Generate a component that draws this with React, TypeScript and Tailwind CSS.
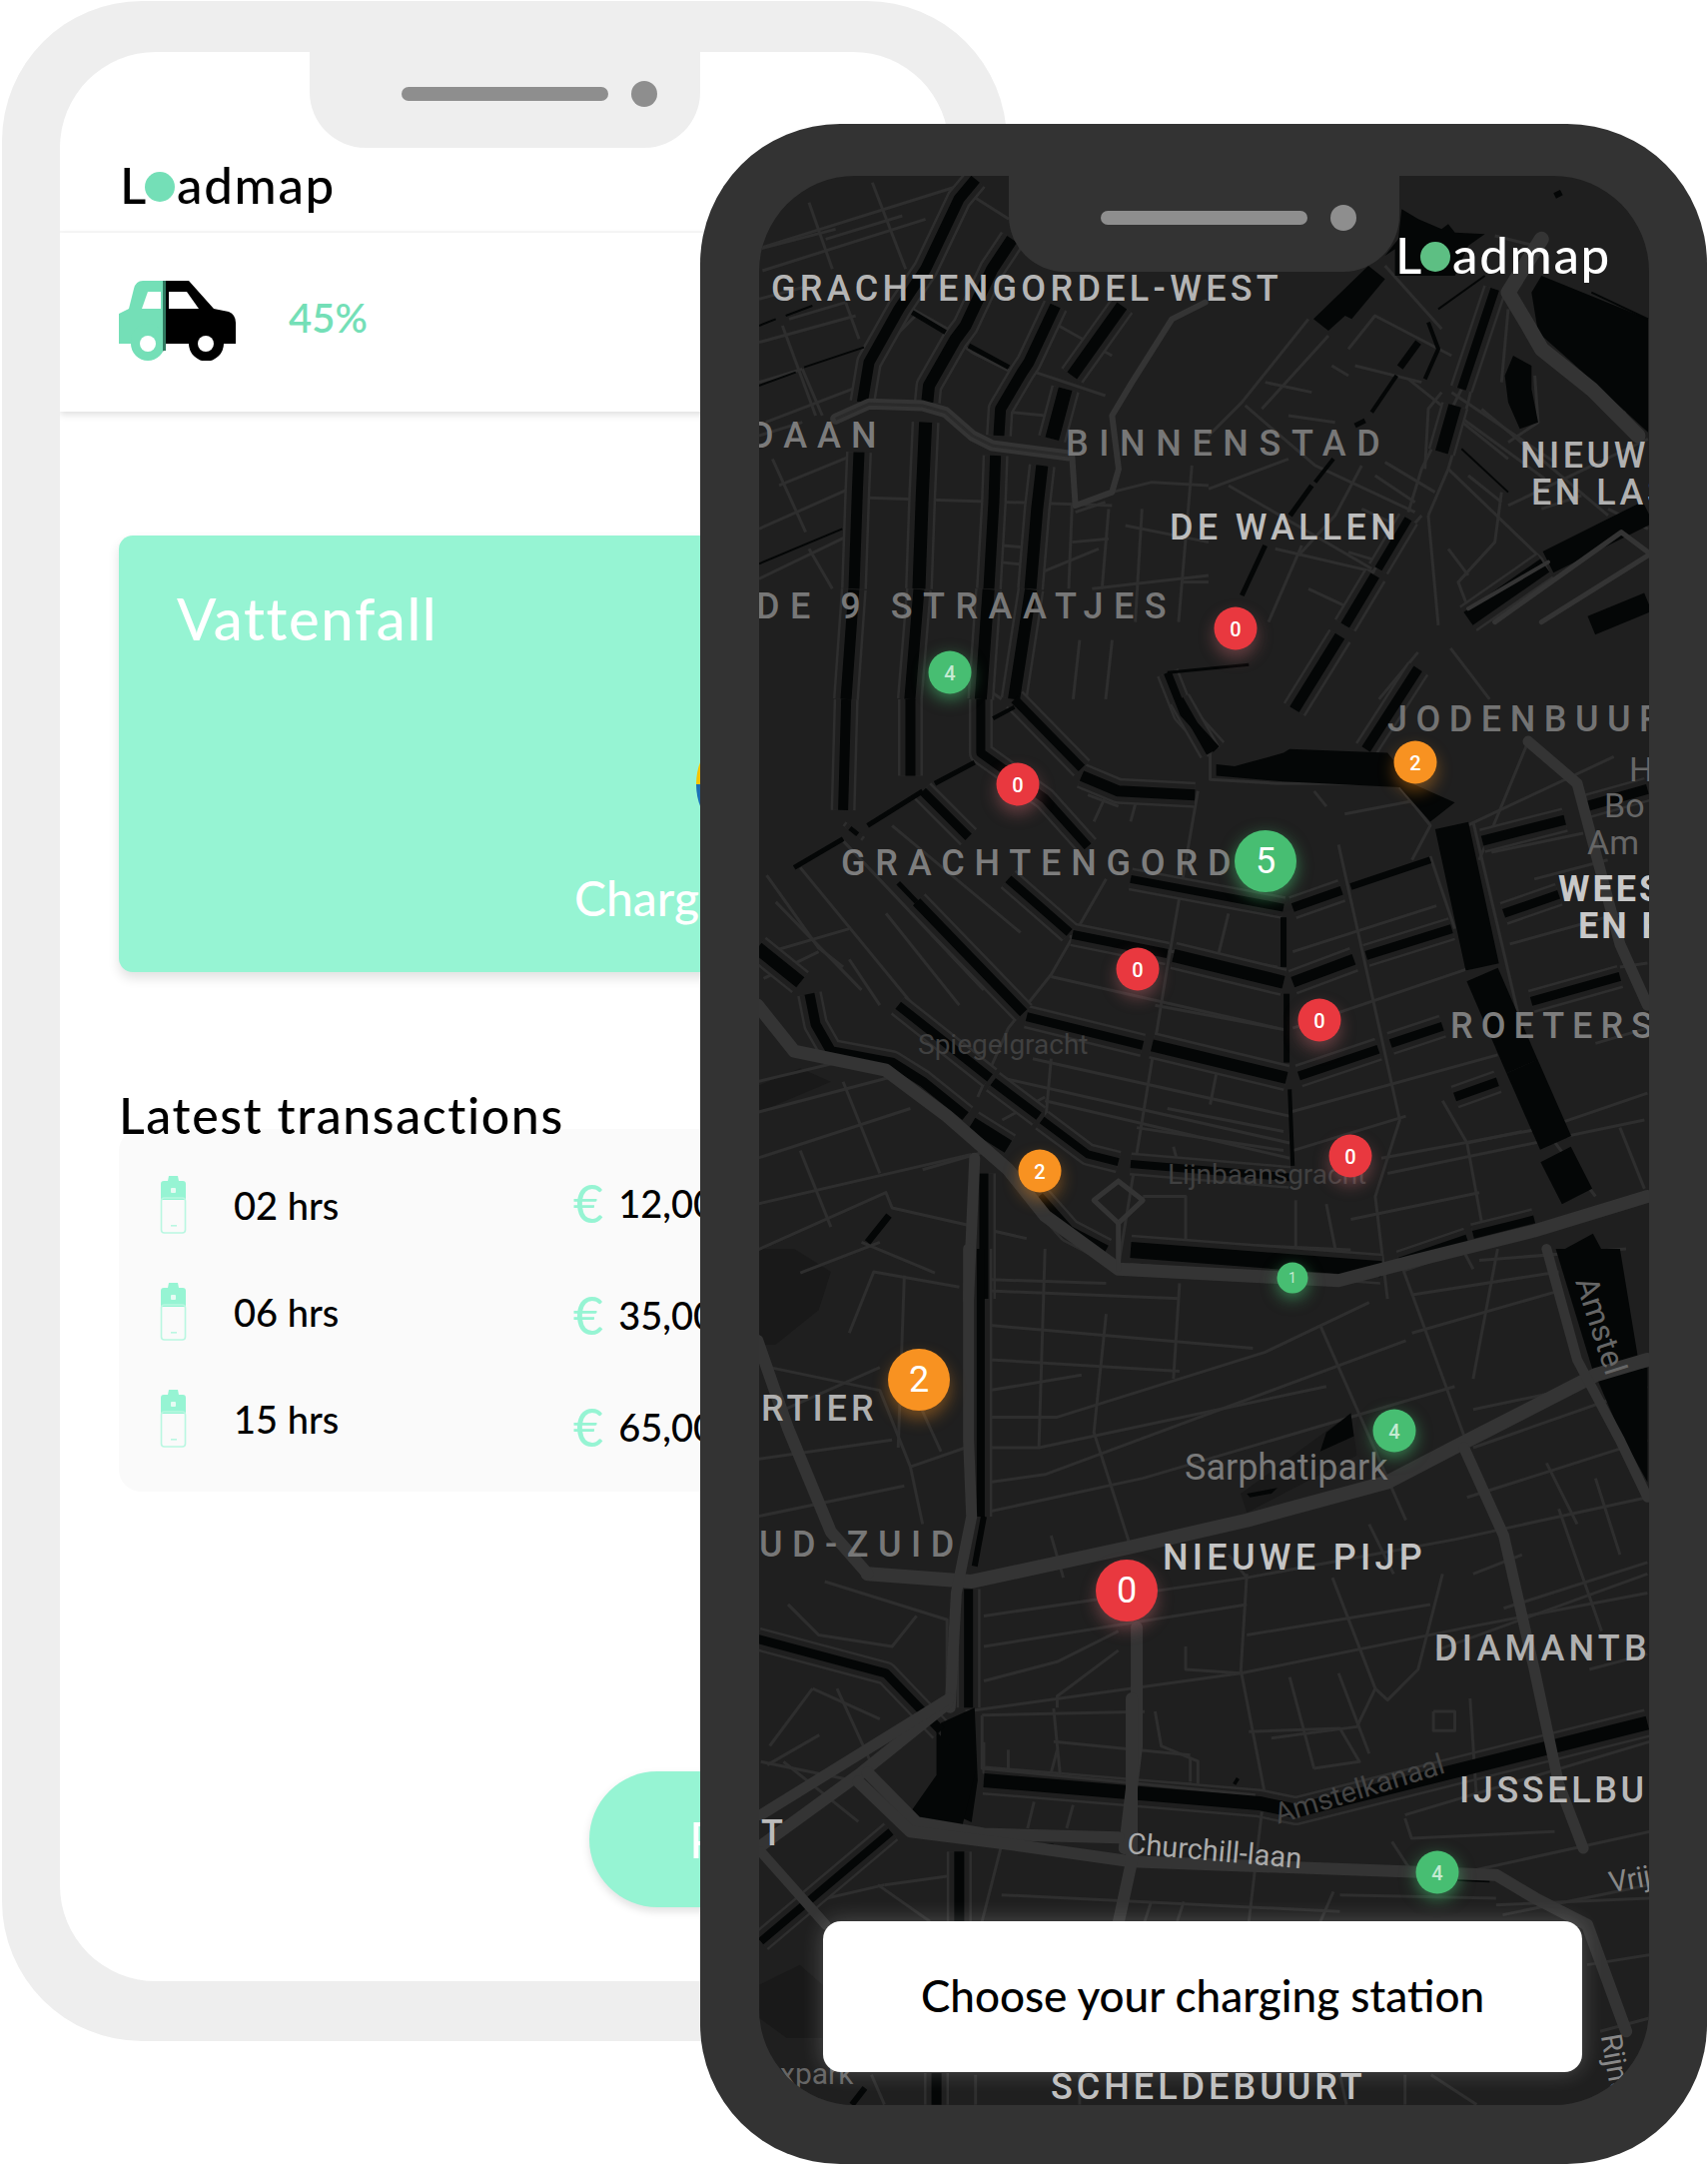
import React from "react";

type Stroke = [string, number];
type Group = {
  t: string;
  minor?: string[];
  canals?: Stroke[];
  roads?: Stroke[];
  black?: string[];
  dark?: string[];
};

const groups: Group[] = [
  {
    t: "translate(760 176) scale(0.3333 0.3333)",
    minor: [
      "10,215 600,30", "10,285 500,130", "0,220 230,160", "150,80 220,280", "340,20 440,280", "200,190 430,120",
      "70,450 170,720", "260,380 300,490", "130,580 190,720", "20,740 280,640", "0,500 290,420", "40,850 140,1070",
      "150,1120 220,1240", "60,930 280,840", "0,1060 270,940", "280,965 1060,990", "640,60 750,130", "350,540 470,420",
      "900,450 1060,540", "830,590 1040,660", "760,710 860,720", "730,1110 840,1120", "720,1160 820,1170",
      "950,1010 1040,980", "940,1100 1050,1090", "1050,1000 1030,1240", "850,1190 1020,1120", "1300,870 1260,1340",
      "1060,950 1180,920 1350,930", "940,990 930,1240", "1270,1220 1350,1220", "0,780 130,740", "0,1210 270,1080",
      "560,470 640,530 800,610", "460,400 620,490", "0,370 150,330", "90,430 260,380", "0,620 130,580", "1100,1050 1350,1100",
      "1150,1000 1130,1340", "1000,1240 1350,1200",
    ],
    canals: [
      ["650,10 600,70 500,280 420,400 330,560 310,680", 11],
      ["300,830 295,950 285,1240", 11],
      ["760,190 700,280 620,450 590,490 510,630 505,680", 12],
      ["500,740 490,960 480,1240", 13],
      ["890,390 810,560 790,590 725,700 720,780", 11],
      ["710,840 705,980 690,1240", 11],
      ["1090,390 940,600", 12],
      ["920,640 880,790", 14],
      ["850,870 835,1000 815,1240", 12],
      ["460,410 560,470", 5],
      ["630,510 750,575", 5],
      ["0,450 50,430", 2],
      ["80,420 160,390", 2],
      ["0,630 110,590", 2],
      ["135,575 315,515", 2],
      ["0,1165 250,1060", 2],
    ],
    roads: [
      ["230,730 330,685 490,690 560,710 640,780 700,810 930,840", 11],
      ["940,840 950,990 1060,950 1080,880 1060,720 1120,620 1240,430 1340,380", 6],
    ],
  },
  {
    t: "translate(1210 176) scale(0.3333 0.3333)",
    minor: [
      "300,430 100,680 0,780", "360,480 160,700", "110,690 320,870 620,1010", "530,270 700,460", "420,520 500,420 730,540",
      "440,570 640,620", "730,650 1040,860", "750,720 1010,910", "600,610 900,850", "760,640 640,880 600,1010",
      "700,650 660,700 650,880", "460,870 380,1020 270,1140", "280,1110 180,1340", "720,880 1000,1150 1020,1190",
      "60,930 490,1180", "200,1120 500,1190", "640,1020 500,1180 400,1340", "660,1020 690,1350",
      "880,950 860,1100 750,1220 780,1300 1000,1150", "900,990 1320,790", "980,600 990,740 900,800", "820,700 1200,1020",
      "860,340 780,680 720,880 660,1020", "900,400 880,620", "170,620 310,650", "240,720 380,740", "370,570 420,600",
      "0,940 240,850", "1150,550 1110,600", "1220,610 1180,660", "1290,670 1250,710", "860,180 980,210",
      "530,860 680,950", "500,900 620,980", "460,1000 590,1060", "720,1120 780,1200", "420,1130 520,1160", "300,1240 470,1320",
      "780,900 880,980", "1200,1000 1320,1060", "1000,1000 1120,960",
    ],
    canals: [
      ["860,340 760,640", 9],
      ["740,690 700,830", 13],
      ["760,820 900,950", 2],
      ["630,500 575,575", 7],
      ["565,600 490,710", 4],
      ["470,735 440,750", 5],
      ["375,850 320,920", 4],
      ["310,930 245,1020", 5],
      ["170,1110 100,1260", 5],
      ["600,1030 510,1180", 8],
      ["500,1200 410,1350", 10],
      ["1320,1010 1020,1160", 24],
      ["1010,1170 780,1330", 16],
      ["1320,1280 1150,1350", 20],
      ["830,300 690,400", 2],
      ["660,440 690,520 650,610", 4],
      ["1150,350 1320,430", 2],
      ["1040,60 1060,50", 6],
    ],
    black: [
      "480,270 530,310 430,430 410,420 360,465 315,430",
      "580,100 630,130 700,160 720,145 740,170 830,175 780,210 740,300 560,300 560,220 530,240 570,190",
      "915,540 970,570 970,640 990,740 935,760 900,680 890,600",
      "1000,300 1320,430 1320,770 1080,550 990,470 970,350",
    ],
    roads: [
      ["1000,190 900,350 960,450 1000,520 1150,640 1290,780", 15],
      ["860,1340 1240,1070 1320,1130", 5],
      ["1000,1340 1320,1140", 5],
      ["780,1300 1020,1160", 4],
    ],
  },
  {
    t: "translate(690 110) scale(0.6515 0.4082)",
    minor: ["240,1310 240,1445", "440,1400 480,1445", "730,1390 750,1445", "1120,1330 1060,1445", "1170,1320 1230,1445", "600,1300 590,1445", "650,1300 640,1445"],
    canals: [
      ["253,1176 241,1445", 11],
      ["353,1176 339,1445", 11],
      ["460,1176 448,1445", 12],
      ["525,1176 499,1445", 12],
      ["735,1380 860,1360", 3],
      ["735,1380 760,1480 810,1568", 8],
      ["1000,1290 930,1470", 11],
      ["1120,1370 1040,1568", 10],
    ],
  },
  {
    t: "translate(740 700) scale(0.6124 0.3827)",
    minor: [
      "750,240 700,700 620,1480", "600,470 510,720 440,860 390,1040", "510,725 880,860", "540,620 880,700", "680,800 895,865",
      "480,940 900,1090", "430,990 900,1160", "500,1050 900,1200", "900,1080 1240,930", "905,860 1200,700", "905,1180 1090,1090",
      "905,660 1140,540", "980,380 1080,1100 1040,1300 1060,1568", "30,1080 290,970", "170,1000 230,1240", "30,1200 280,1070",
      "30,1320 380,1190", "30,1440 240,1290 250,1330 470,1410", "100,1180 150,1380", "45,460 130,650 170,700",
      "100,440 300,830", "170,370 400,760", "250,330 460,610", "130,660 40,730", "180,600 30,670", "1290,110 1210,420",
      "1200,320 1320,1140", "1050,1200 1320,1120 1485,1030", "1150,1050 1190,1160 1280,1130", "1060,1240 1480,1100",
      "1190,1160 1220,1420", "1320,1130 1400,1300", "1400,900 1485,860", "1230,400 1380,350", "1260,640 1440,560",
      "660,1300 730,1300 730,1420 1000,1440", "780,980 770,1060", "710,1170 720,1230", "910,1310 910,1480",
      "960,1320 980,1480", "1170,1400 1200,1490", "180,680 230,800", "570,250 620,280", "940,240 960,280",
      "1080,230 1130,330 1100,420", "770,140 770,210 880,220 1060,220", "430,1100 500,1040", "510,940 500,1120",
      "1190,330 1430,150", "1440,700 1485,690", "600,250 580,320", "650,260 640,320", "240,560 360,800", "60,530 200,760",
      "700,1070 890,1130", "650,1120 890,1180", "30,1000 160,950", "300,1230 430,1170", "200,1420 320,1500", "100,1500 230,1420",
      "1130,410 1170,600", "990,300 1120,260", "1000,1360 1210,1290", "800,560 780,690", "1300,470 1420,420", "1440,1120 1480,1280",
    ],
    canals: [
      ["175,0 170,290", 10],
      ["185,350 190,340", 10],
      ["290,530 465,820", 10],
      ["30,650 100,740", 13],
      ["115,770 125,850 150,920 250,950 300,1000 370,1090", 10],
      ["380,1110 440,1170", 14],
      ["260,800 410,990", 9],
      ["415,1000 490,1090", 9],
      ["495,1100 570,1190 620,1210", 8],
      ["640,1215 900,1250", 8],
      ["490,1300 540,1390 600,1440", 10],
      ["640,1440 1050,1490", 16],
      ["1080,1470 1190,1410", 8],
      ["1200,1400 1300,1360", 8],
      ["280,0 280,200", 10],
      ["300,240 375,360", 9],
      ["440,470 540,610", 9],
      ["545,615 700,665", 9],
      ["710,670 890,740", 13],
      ["905,740 1005,680", 11],
      ["1025,670 1165,600", 9],
      ["395,0 395,140 500,260 570,385", 9],
      ["560,200 620,240 745,250", 11],
      ["450,0 560,180", 9],
      ["720,0 770,140", 8],
      ["470,830 660,905", 9],
      ["675,905 895,990", 12],
      ["915,985 1045,915", 9],
      ["1065,900 1150,855", 9],
      ["640,470 890,545", 8],
      ["905,545 985,500", 9],
      ["1000,490 1130,420", 7],
      ["890,570 890,700", 6],
      ["895,770 895,950", 6],
      ["900,1020 905,1220", 4],
      ["90,440 170,365", 5],
      ["210,330 300,240", 5],
      ["320,220 385,165", 5],
      ["415,50 450,20", 4],
      ["260,480 290,530", 5],
      ["1165,330 1215,700", 34],
      ["1215,720 1280,960", 34],
      ["1280,960 1335,1160", 34],
      ["1335,1190 1370,1300", 34],
      ["1370,1420 1420,1568", 36],
      ["1215,370 1350,315", 10],
      ["1250,560 1340,510", 9],
      ["1295,790 1440,725", 9],
      ["1170,1040 1240,1000", 9],
      ["1385,280 1485,235", 10],
      ["210,1420 245,1350", 7],
      ["400,1240 400,1568", 9],
    ],
    black: ["780,170 810,175 890,140 900,130 1060,140 1100,220 1170,270 1130,320 1080,230 890,215 780,200"],
    dark: ["32,1010 100,965 150,1000 32,1080"],
    roads: [
      ["30,800 90,920 240,970 340,1090 440,1230 500,1350 620,1490 980,1520 1100,1470 1300,1390 1485,1300", 13],
      ["385,1200 375,1568", 11],
      ["1290,110 1370,220 1440,640 1485,800", 11],
      ["620,1260 580,1310 620,1370 660,1310 620,1260", 5],
      ["620,1370 620,1490", 5],
    ],
  },
  {
    t: "translate(740 1250) scale(0.6124 0.3827)",
    minor: [
      "410,110 720,130", "410,200 840,260", "410,290 720,320", "410,440 520,440 860,270 1030,140", "410,520 490,520 960,360",
      "410,610 500,590 1090,240", "400,690 660,600 1170,360", "500,0 490,520", "600,170 580,480 640,780", "720,90 710,340",
      "950,200 1090,710", "1080,30 1190,510", "400,960 830,860 1170,760 1485,650", "400,1040 830,930", "400,1130 520,1080 620,1000",
      "520,1200 520,1170 620,1050", "370,1210 820,1110 1190,990 1485,900", "400,1290 400,1370 740,1400", "730,1040 730,1100 820,1110 830,850",
      "820,1100 860,1430", "970,860 1040,1150 1060,1180 1110,1100 1150,850", "870,1280 1010,1250 1040,1150", "1190,650 1485,500",
      "1140,1050 1485,850", "1340,680 1410,1000", "30,700 270,620", "30,550 250,500", "60,430 230,310", "180,220 220,60 360,100",
      "260,520 270,70", "330,530 290,390", "50,310 230,370 280,570 370,520", "280,570 300,720", "140,870 340,970 340,1180",
      "80,930 130,1010 250,1040 290,960", "120,1150 230,1230", "120,1150 50,1300", "220,1360 160,1150", "510,750 530,860",
      "1200,520 1485,360", "1320,560 1370,720", "1400,600 1440,800", "1390,1100 1485,1060", "900,1120 940,1360", "980,1110 1030,1320",
      "1135,1210 1170,1210 1170,1260 1135,1260 1135,1210", "1240,0 1200,340", "440,1310 440,1360", "520,1310 510,1370", "680,1210 690,1300 750,1340 750,1400",
      "1210,30 1450,0", "1100,120 1340,60", "1100,220 1340,110", "1200,420 1320,380", "400,80 600,90", "830,1010 1130,930",
      "1200,850 1280,800", "1250,940 1485,820", "800,800 830,860", "1030,720 1070,850", "410,370 560,330",
    ],
    canals: [
      ["395,0 395,700", 8],
      ["400,700 385,830", 6],
      ["375,890 375,1200", 9],
      ["30,1020 240,1110 330,1260", 9],
      ["400,1390 850,1450 910,1470 1485,1240", 14],
      ["810,1390 815,1395", 7],
    ],
    black: [
      "330,1240 385,1200 390,1390 380,1500 300,1440 330,1370",
      "1335,0 1440,0 1470,290 1395,315",
      "1400,330 1485,310 1485,610 1440,480",
      "960,480 1000,430 1005,490 950,530",
      "830,640 880,625 870,640 835,650",
    ],
    dark: ["820,640 1000,430 1010,540 830,690", "32,0 90,0 150,60 130,160 60,250 32,250"],
    roads: [
      ["210,850 380,870 640,780 830,710 1060,610 1180,510 1400,330 1485,290", 14],
      ["375,0 375,500 380,700 355,900 345,1200", 11],
      ["650,990 650,1300 630,1568", 12],
      ["1185,520 1250,750 1300,1100 1340,1400 1380,1568", 11],
      ["1320,0 1370,290 1440,500 1485,650", 10],
      ["30,240 80,470 150,740 210,850", 12],
      ["340,1190 200,1370 30,1568", 12],
      ["210,1370 290,1500 400,1530 620,1540", 12],
    ],
  },
  {
    t: "translate(690 1700) scale(0.6515 0.3333)",
    minor: [
      "480,440 450,670", "530,310 520,390", "590,320 580,390", "450,50 450,210 870,290", "560,30 570,230", "770,180 770,250",
      "880,340 860,670", "990,580 970,670", "1100,360 1110,420 1330,400", "1100,350 1476,130", "1150,540 1476,400", "1250,650 1476,560",
      "1380,800 1476,770", "120,200 200,110", "145,190 260,370", "110,190 260,250", "300,560 410,530", "190,610 300,560", "290,560 370,670",
      "480,590 1000,640", "710,610 700,670", "760,610 750,670", "1000,590 1240,600", "1240,620 1476,600", "1400,1000 1476,960",
      "450,50 700,40", "860,100 1000,90 1030,190 960,210", "1200,0 1210,300", "1080,430 1110,520", "560,130 770,170",
      "1140,1130 1210,1220", "1000,1130 1010,1220", "1100,1130 1100,1220", "440,1130 440,1220", "600,1130 600,1220", "280,1130 300,1220",
    ],
    canals: [
      ["415,460 415,670", 10],
      ["110,730 310,400", 8],
      ["380,1125 380,1220", 10],
      ["250,1220 270,1170", 6],
      ["470,430 560,440", 2],
      ["1180,545 1230,550", 2],
    ],
    black: ["380,100 440,220 420,380 330,370 380,230"],
    dark: ["108,860 170,800 205,860 205,1020 150,1020 108,960"],
    roads: [
      ["400,0 110,350", 11],
      ["260,250 340,400 500,440 680,490 1100,520 1240,530 1300,600 1380,680 1440,1000", 12],
      ["110,460 210,680", 10],
      ["680,0 680,490 660,670", 12],
    ],
  },
];

function MapDrawing() {
  const ve = { vectorEffect: "non-scaling-stroke" as const };
  return (
    <svg viewBox="760 176 891 1931" className="absolute inset-0 h-full w-full" fill="none" strokeLinejoin="round" strokeLinecap="butt">
      {groups.map((g, i) => (
        <g key={"d" + i} transform={g.t}>
          {(g.dark ?? []).map((p, j) => (
            <polygon key={j} points={p} fill="#191919" />
          ))}
        </g>
      ))}
      {groups.map((g, i) => (
        <g key={"m" + i} transform={g.t}>
          {(g.minor ?? []).map((p, j) => (
            <polyline key={j} points={p} stroke="#2e2e2e" strokeWidth={3} {...ve} />
          ))}
          {(g.canals ?? []).filter((c) => c[1] > 7 && c[1] < 20).map((c, j) => (
            <polyline key={j} points={c[0]} stroke="#2e2e2e" strokeWidth={c[1] + 15} {...ve} />
          ))}
          {(g.canals ?? []).filter((c) => c[1] > 7 && c[1] < 20).map((c, j) => (
            <polyline key={j} points={c[0]} stroke="#1f1f1f" strokeWidth={c[1] + 10} {...ve} />
          ))}
        </g>
      ))}
      {groups.map((g, i) => (
        <g key={"c" + i} transform={g.t}>
          {(g.black ?? []).map((p, j) => (
            <polygon key={j} points={p} fill="#040606" />
          ))}
          {(g.canals ?? []).map((c, j) => (
            <polyline key={j} points={c[0]} stroke="#040606" strokeWidth={c[1]} {...ve} />
          ))}
        </g>
      ))}
      {groups.map((g, i) => (
        <g key={"r" + i} transform={g.t}>
          {(g.roads ?? []).map((c, j) => (
            <polyline key={j} points={c[0]} stroke="#343434" strokeWidth={c[1]} strokeLinecap="round" {...ve} />
          ))}
        </g>
      ))}
      <polyline transform="translate(760 176) scale(0.3333)" points="230,730 330,685 490,690 560,710 640,780 700,810 930,840" stroke="#2a2a2a" strokeWidth={3} vectorEffect="non-scaling-stroke" />
    </svg>
  );
}

function Logo({ dark }: { dark?: boolean }) {
  return (
    <span className={"font-['Lato',sans-serif] text-[51px] font-medium leading-none tracking-[1.7px] " + (dark ? "text-white" : "text-black")}>
      L
      <span className="relative text-transparent">
        o
        <span className={"absolute left-[-1px] top-[18px] h-[30px] w-[30px] rounded-full " + (dark ? "bg-[#5dbf83]" : "bg-[#74dfb7]")} />
      </span>
      admap
    </span>
  );
}

function Notch({ className }: { className: string }) {
  return (
    <div className={"absolute z-20 flex h-[96px] w-[391px] items-center gap-[23px] rounded-b-[56px] pb-[12px] pl-[92px] " + className}>
      <div className="h-[14px] w-[207px] rounded-full bg-[#8e8e8e]" />
      <div className="h-[26px] w-[26px] rounded-full bg-[#8e8e8e]" />
    </div>
  );
}

function Car() {
  const body =
    "M20 0H70L95 28L110 31Q117 34 117 42V63H105A17 17 0 0 1 70 63H46A17 17 0 0 1 12 63H0V33L10 28L15 8Q17 0 24 0Z";
  return (
    <svg viewBox="0 0 117 80" className="h-[80px] w-[117px]">
      <defs>
        <clipPath id="carL">
          <rect x="0" y="0" width="44" height="80" />
        </clipPath>
        <clipPath id="carR">
          <rect x="44" y="0" width="73" height="80" />
        </clipPath>
      </defs>
      <path d={body} fill="#74dfb7" clipPath="url(#carL)" />
      <path d={body} fill="#000" clipPath="url(#carR)" />
      <circle cx="29" cy="60" r="17" fill="#74dfb7" clipPath="url(#carL)" />
      <rect x="44" y="0" width="3" height="70" fill="#2f7a60" />
      <circle cx="87" cy="60" r="17" fill="#000" />
      <circle cx="29" cy="63" r="8" fill="#fff" />
      <circle cx="87" cy="63" r="8" fill="#fff" />
      <path d="M23 28L29 11H42V28Z" fill="#fff" />
      <path d="M50 11H68L80 28H50Z" fill="#fff" />
    </svg>
  );
}

function Battery() {
  return (
    <svg viewBox="0 0 27 58" className="h-[58px] w-[27px]">
      <path d="M9 0h9l1 5h4q3 0 3 3v16H1V8q0-3 3-3h4Z" fill="#96f4d3" />
      <rect x="1.5" y="22" width="24" height="35" rx="3" fill="none" stroke="#b9f7e1" strokeWidth="1.6" />
      <rect x="11" y="12" width="5" height="5" rx="1" fill="#e6fbf3" />
      <rect x="11" y="49" width="6" height="1.6" fill="#b9f7e1" />
    </svg>
  );
}

const rows = ["02 hrs", "06 hrs", "15 hrs"];
const amounts = ["12,00", "35,00", "65,00"];

const pinBase = "absolute flex -translate-x-1/2 -translate-y-1/2 items-center justify-center rounded-full font-['Roboto',sans-serif] text-white";
const red = " bg-[#e9383f] shadow-[0_8px_16px_rgba(233,120,130,0.35)]";
const green = " bg-[#47be72] shadow-[0_5px_16px_rgba(71,190,114,0.6)]";
const orange = " bg-[#f89221] shadow-[0_8px_16px_rgba(248,146,33,0.4)]";
const small = " h-[43px] w-[43px] text-[20px] font-medium";
const big = " h-[62px] w-[62px] text-[36px] font-normal";

const pins: [string, string][] = [
  ["4", pinBase + green + small + " left-[191px] top-[497px] text-white/70"],
  ["0", pinBase + red + small + " left-[477px] top-[453px]"],
  ["0", pinBase + red + small + " left-[259px] top-[609px]"],
  ["2", pinBase + orange + small + " left-[657px] top-[587px]"],
  ["5", pinBase + green + big + " left-[507px] top-[686px]"],
  ["0", pinBase + red + small + " left-[379px] top-[794px]"],
  ["0", pinBase + red + small + " left-[561px] top-[845px]"],
  ["0", pinBase + red + small + " left-[592px] top-[981px]"],
  ["2", pinBase + orange + small + " left-[281px] top-[996px]"],
  ["1", pinBase + green + " h-[31px] w-[31px] text-[14px] left-[534px] top-[1103px] text-white/70"],
  ["2", pinBase + orange + big + " left-[160px] top-[1205px]"],
  ["4", pinBase + green + small + " left-[636px] top-[1256px] text-white/70"],
  ["0", pinBase + red + big + " left-[368px] top-[1416px]"],
  ["4", pinBase + green + small + " left-[679px] top-[1698px] text-white/70"],
];

const lb = "absolute -translate-y-1/2 whitespace-nowrap font-['Roboto',sans-serif] leading-none ";
const head = lb + "text-[36px] ";
const name = lb + "font-normal ";
const labels: [string, string][] = [
  ["GRACHTENGORDEL-WEST", head + "font-medium left-[12px] top-[113px] tracking-[4.3px] text-[#b4b4b4]"],
  ["DAAN", head + "font-medium left-[-9px] top-[260px] tracking-[10px] text-[#7b7b7b]"],
  ["BINNENSTAD", head + "font-medium left-[307px] top-[268px] tracking-[10.6px] text-[#777777]"],
  ["NIEUWMARKT", head + "font-medium left-[762px] top-[280px] tracking-[3.5px] text-[#b0b0b0]"],
  ["EN LASTAGE", head + "font-medium left-[773px] top-[317px] tracking-[3.5px] text-[#b0b0b0]"],
  ["DE WALLEN", head + "font-medium left-[411px] top-[352px] tracking-[4.3px] text-[#bdbdbd]"],
  ["DE 9 STRAATJES", head + "font-medium left-[-3px] top-[431px] tracking-[10.5px] text-[#777777]"],
  ["JODENBUURT", head + "font-medium left-[629px] top-[544px] tracking-[8.5px] text-[#737373]"],
  ["H", name + "left-[871px] top-[594px] text-[34px] text-[#666666]"],
  ["Bo", name + "left-[846px] top-[630px] text-[34px] text-[#666666]"],
  ["Am", name + "left-[829px] top-[667px] text-[34px] text-[#666666]"],
  ["GRACHTENGORD", head + "font-medium left-[82px] top-[688px] tracking-[9.8px] text-[#7d7d7d]"],
  ["WEESPERBUURT", head + "font-bold left-[800px] top-[714px] tracking-[3px] text-[#c8c8c8]"],
  ["EN PLANTAGE", head + "font-bold left-[820px] top-[751px] tracking-[3px] text-[#c8c8c8]"],
  ["ROETERSEILAND", head + "font-medium left-[692px] top-[851px] tracking-[8px] text-[#7d7d7d]"],
  ["Spiegelgracht", name + "left-[159px] top-[870px] text-[28px] text-[#404040]"],
  ["Lijnbaansgracht", name + "left-[409px] top-[1000px] text-[28px] text-[#404040]"],
  ["Amstel", name + "left-[843px] top-[1151px] -translate-x-1/2 rotate-[72deg] text-[32px] text-[#666666]"],
  ["RTIER", head + "font-medium left-[2px] top-[1234px] tracking-[4px] text-[#b0b0b0]"],
  ["Sarphatipark", name + "left-[426px] top-[1293px] text-[36px] text-[#7a7a7a]"],
  ["UD-ZUID", head + "font-medium left-0 top-[1370px] tracking-[9.5px] text-[#777777]"],
  ["NIEUWE PIJP", head + "font-medium left-[404px] top-[1383px] tracking-[4.3px] text-[#c4c4c4]"],
  ["DIAMANTBUURT", head + "font-medium left-[676px] top-[1474px] tracking-[4.2px] text-[#b0b0b0]"],
  ["IJSSELBUURT", head + "font-medium left-[701px] top-[1616px] tracking-[3.6px] text-[#b8b8b8]"],
  ["Amstelkanaal", name + "left-[601px] top-[1615px] -translate-x-1/2 -rotate-[17deg] text-[29px] text-[#444444]"],
  ["T", head + "font-medium left-[2px] top-[1659px] text-[#bbbbbb]"],
  ["Churchill-laan", name + "left-[456px] top-[1677px] -translate-x-1/2 rotate-[5deg] text-[29px] text-[#aaaaaa]"],
  ["Vrijheidslaan", name + "left-[851px] top-[1709px] origin-left -rotate-[10deg] text-[29px] text-[#888888]"],
  ["Rijnstraat", name + "left-[852px] top-[1860px] origin-left rotate-[80deg] text-[29px] text-[#888888]"],
  ["xpark", name + "left-[21px] top-[1900px] text-[30px] text-[#666666]"],
  ["SCHELDEBUURT", head + "font-medium left-[292px] top-[1913px] tracking-[4px] text-[#c0c0c0]"],
];

export default function App() {
  return (
    <div className="relative h-[2168px] w-[1710px] overflow-hidden bg-white pl-[2px] pt-px font-['Lato',sans-serif] text-black">
      {/* back phone */}
      <div className="relative h-[2042px] w-[1006px] rounded-[140px] bg-[#eeeeee] px-[58px] pb-[60px] pt-[51px]">
        <Notch className="left-[308px] top-[51px] bg-[#eeeeee]" />
        <div className="flex h-full flex-col overflow-hidden rounded-[96px] bg-white">
          <div className="flex h-[181px] shrink-0 items-end border-b-2 border-[#f8f8f8] pb-[21px] pl-[60px]">
            <Logo />
          </div>
          <div className="flex h-[179px] shrink-0 items-center gap-[53px] pb-[4px] pl-[59px] shadow-[0_3px_7px_rgba(0,0,0,0.13)]">
            <Car />
            <span className="mb-[6px] text-[40px] font-semibold leading-none text-[#74dfb7]">45%</span>
          </div>
          <div className="flex flex-col pl-[59px]">
            <div className="relative mt-[124px] flex h-[437px] w-[772px] flex-col justify-between rounded-[14px] bg-[#96f4d3] pb-[50px] pl-[58px] pt-[54px] shadow-[0_6px_12px_rgba(0,0,0,0.12)]">
              <div className="text-[58px] font-medium leading-none tracking-[1.6px] text-white">Vattenfall</div>
              <div className="ml-[398px] text-[48px] font-medium leading-none text-white">Charging</div>
              <div className="absolute left-[578px] top-[186px] h-[126px] w-[126px] rounded-full bg-[linear-gradient(#f5c400_50%,#1a6fb5_50%)]" />
            </div>
            <h2 className="relative z-10 mt-[125px] h-[32px] text-[50px] font-medium leading-[37px] tracking-[1.6px] text-black">Latest transactions</h2>
            <div className="grid h-[363px] w-[772px] grid-cols-[455px_1fr] rounded-[22px] bg-[#fafafa]">
              <div className="flex flex-col pt-[22px]">
                {rows.map((r) => (
                  <div key={r} className="flex h-[107px] items-center gap-[47px] pl-[41px]">
                    <Battery />
                    <span className="text-[38px] font-medium leading-none">{r}</span>
                  </div>
                ))}
              </div>
              <div className="flex flex-col pt-[18px]">
                {amounts.map((a) => (
                  <div key={a} className="flex h-[112px] items-center gap-[15px]">
                    <span className="text-[52px] leading-none text-[#96f4d3]">€</span>
                    <span className="text-[38px] font-medium leading-none">{a}</span>
                  </div>
                ))}
              </div>
            </div>
            <div className="ml-[471px] mt-[280px] flex h-[136px] w-[300px] items-center rounded-[68px] bg-[#96f4d3] pl-[100px] text-[50px] leading-none text-white shadow-[0_4px_8px_rgba(0,0,0,0.12)]">
              Pay
            </div>
          </div>
        </div>
      </div>

      {/* front phone */}
      <div className="absolute left-[701px] top-[124px] h-[2042px] w-[1008px] rounded-[140px] bg-[#333333] pb-[59px] pl-[59px] pr-[58px] pt-[52px]">
        <Notch className="left-[309px] top-[52px] bg-[#333333]" />
        <div className="relative h-full overflow-hidden rounded-[96px] bg-[#1f1f1f]">
          <MapDrawing />
          {labels.map(([t, c]) => (
            <span key={t} className={c}>
              {t}
            </span>
          ))}
          {pins.map(([t, c], i) => (
            <span key={i} className={c}>
              {t}
            </span>
          ))}
          <div className="absolute left-[637px] top-[53px]">
            <Logo dark />
          </div>
          <div className="absolute bottom-[33px] left-[64px] flex h-[151px] w-[760px] items-center justify-center rounded-[18px] bg-white pb-[3px] text-[44px] font-medium text-black shadow-[0_0_22px_rgba(255,255,255,0.22)]">
            Choose your charging station
          </div>
        </div>
      </div>
    </div>
  );
}
